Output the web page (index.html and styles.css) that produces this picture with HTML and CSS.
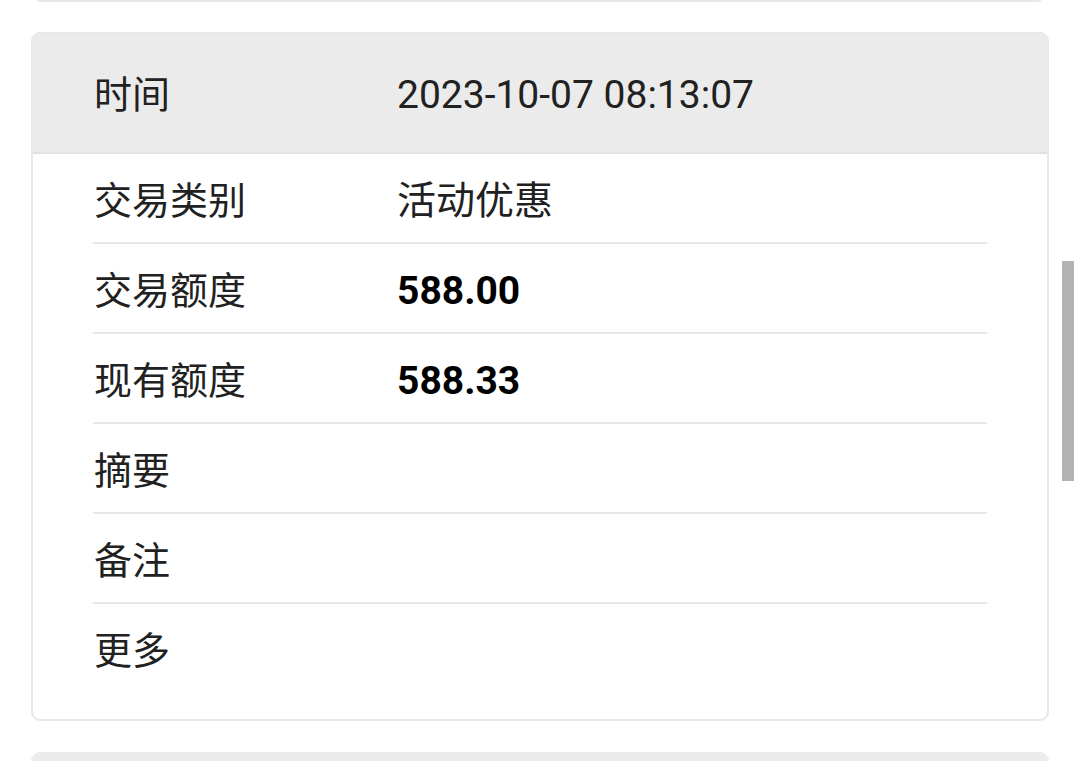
FILE: index.html
```html
<!DOCTYPE html>
<html lang="zh-CN">
<head>
<meta charset="utf-8">
<title>交易详情</title>
<link rel="stylesheet" href="styles.css">
</head>
<body>
<div class="page">
  <div class="card-stub"></div>
  <div class="card">
    <div class="card-head">
      <span class="label">时间</span>
      <span class="value">2023-10-07 08:13:07</span>
    </div>
    <div class="card-body">
      <div class="row"><span class="label">交易类别</span><span class="value">活动优惠</span></div>
      <div class="row"><span class="label">交易额度</span><span class="value strong">588.00</span></div>
      <div class="row"><span class="label">现有额度</span><span class="value strong">588.33</span></div>
      <div class="row"><span class="label">摘要</span><span class="value"></span></div>
      <div class="row"><span class="label">备注</span><span class="value"></span></div>
      <div class="row last"><span class="label">更多</span><span class="value"></span></div>
    </div>
  </div>
  <div class="card next">
    <div class="card-head"></div>
  </div>
</div>
<div class="scrollbar"></div>
</body>
</html>
```

FILE: styles.css
```css
html, body {
  margin: 0;
  padding: 0;
  background: #ffffff;
  overflow: hidden;
}
body {
  font-family: Roboto, "Noto Sans CJK SC", sans-serif;
  color: #212121;
  height: 761px;
}
.page {
  display: flex;
  flex-direction: column;
  gap: 30px;
  padding: 0 30px 0 31px;
}
.card-stub {
  height: 8px;
  margin-top: -8px;
  margin-left: 2px;
  margin-right: 4px;
  border: 2px solid #e8e8e8;
  border-top: none;
  border-radius: 0 0 8px 8px;
  background: #fff;
}
.card {
  width: 1014px;
  border: 2px solid #e8e8e8;
  border-radius: 9px;
  overflow: hidden;
  background: #fff;
  flex-shrink: 0;
}
.card-head {
  background: #ebebeb;
  height: 120px;
  box-sizing: border-box;
  display: flex;
  align-items: center;
  padding: 3px 60px 0;
  border-bottom: 2px solid #e2e2e2;
  font-size: 38px;
  line-height: 46px;
}
.card.next {
  margin-top: 1px;
  border-color: #ebebeb;
}
.card.next .card-head {
  border-bottom: none;
}
.card-body {
  padding: 0 60px 27px;
}
.row {
  height: 90px;
  box-sizing: border-box;
  display: flex;
  align-items: center;
  padding-top: 6px;
  border-bottom: 2px solid #e8e8e8;
  font-size: 38px;
  line-height: 46px;
}
.row.last {
  height: 88px;
  border-bottom: none;
}
.label {
  width: 303px;
  flex-shrink: 0;
  padding-left: 1px;
}
.value {
  flex: 1;
  font-size: 39px;
}
.strong {
  font-weight: 700;
  color: #000;
}
.scrollbar {
  position: fixed;
  left: 1062px;
  top: 261px;
  width: 12px;
  height: 220px;
  background: #b3b3b3;
}
```
